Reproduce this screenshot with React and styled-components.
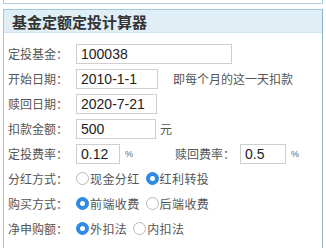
import React from 'react';
import styled, { createGlobalStyle } from 'styled-components';

const GlobalStyle = createGlobalStyle`
    body {
        margin: 0;
        background: #fff;
        font-family: "Noto Sans CJK SC", "Liberation Sans", sans-serif;
    }
`;

const Page = styled.div`
    width: 326px;
    height: 248px;
    overflow: hidden;
    padding: 0 3px;
    box-sizing: border-box;
`;

const PrevBox = styled.div`
    height: 3px;
    border: 1px solid #a9d0e2;
    border-top: none;
    margin-bottom: 5px;
`;

const Panel = styled.div`
    border: 1px solid #9fc9dc;
    border-right-color: #8fb3c6;
    height: 300px;
`;

const Header = styled.div`
    height: 22px;
    background: #e0eef6;
    border-bottom: 1px solid #d3e4ee;
    padding-left: 8px;
    display: flex;
    align-items: center;
    h3 {
        margin: 0;
        font-size: 15px;
        font-weight: bold;
        color: #333;
        line-height: 1;
    }
`;

const Body = styled.div`
    padding: 8px 0 0 4px;
`;

const Row = styled.div`
    display: flex;
    align-items: center;
    height: 25px;
    font-size: 12px;
    color: #555;
`;

const Label = styled.span`
    width: ${p => p.$w || 68}px;
    margin-left: ${p => p.$ml || 0}px;
    flex-shrink: 0;
    font-size: 12px;
    color: #555;
`;

const Input = styled.input`
    width: ${p => p.$w}px;
    height: 20px;
    box-sizing: border-box;
    border: 1px solid #cfcfcf;
    padding: 0 4px;
    margin: 0;
    font-family: "Liberation Sans", Arial, sans-serif;
    font-size: 14px;
    color: #222;
    outline: none;
`;

const Hint = styled.span`
    margin-left: ${p => p.$ml || 4}px;
    color: #555;
`;

const Unit = styled.span`
    margin-left: 5px;
    font-family: "Liberation Sans", Arial, sans-serif;
    font-size: 9px;
    color: #666;
    width: ${p => p.$w || 'auto'};
`;

const RadioWrap = styled.label`
    display: flex;
    align-items: center;
    margin-right: 6px;
    color: #555;
    letter-spacing: 0.4px;
`;

const Dot = styled.span`
    width: 13px;
    height: 13px;
    box-sizing: border-box;
    border-radius: 50%;
    border: 1px solid ${p => (p.$on ? '#2f8ae5' : '#b8b8b8')};
    background: ${p => (p.$on ? '#2f8ae5' : '#fff')};
    display: flex;
    align-items: center;
    justify-content: center;
    margin-right: 1px;
    &::after {
        content: '';
        width: 5px;
        height: 5px;
        border-radius: 50%;
        background: #fff;
        display: ${p => (p.$on ? 'block' : 'none')};
    }
`;

const Radio = ({ on, children }) => (
    <RadioWrap>
        <Dot $on={on} />
        {children}
    </RadioWrap>
);

const App = () => {
    return (
        <Page>
            <GlobalStyle />
            <PrevBox />
            <Panel>
                <Header>
                    <h3>基金定额定投计算器</h3>
                </Header>
                <Body>
                    <Row>
                        <Label>定投基金：</Label>
                        <Input $w={156} defaultValue="100038" />
                    </Row>
                    <Row>
                        <Label>开始日期：</Label>
                        <Input $w={82} defaultValue="2010-1-1" />
                        <Hint $ml={15}>即每个月的这一天扣款</Hint>
                    </Row>
                    <Row>
                        <Label>赎回日期：</Label>
                        <Input $w={81} defaultValue="2020-7-21" />
                    </Row>
                    <Row>
                        <Label>扣款金额：</Label>
                        <Input $w={80} defaultValue="500" />
                        <Hint $ml={4}>元</Hint>
                    </Row>
                    <Row>
                        <Label>定投费率：</Label>
                        <Input $w={44} defaultValue="0.12" />
                        <Unit $w="10px">%</Unit>
                        <Label $w={65} $ml={40}>赎回费率：</Label>
                        <Input $w={46} defaultValue="0.5" />
                        <Unit>%</Unit>
                    </Row>
                    <Row>
                        <Label>分红方式：</Label>
                        <Radio>现金分红</Radio>
                        <Radio on>红利转投</Radio>
                    </Row>
                    <Row>
                        <Label>购买方式：</Label>
                        <Radio on>前端收费</Radio>
                        <Radio>后端收费</Radio>
                    </Row>
                    <Row>
                        <Label>净申购额：</Label>
                        <Radio on>外扣法</Radio>
                        <Radio>内扣法</Radio>
                    </Row>
                </Body>
            </Panel>
        </Page>
    );
};

export default App;
